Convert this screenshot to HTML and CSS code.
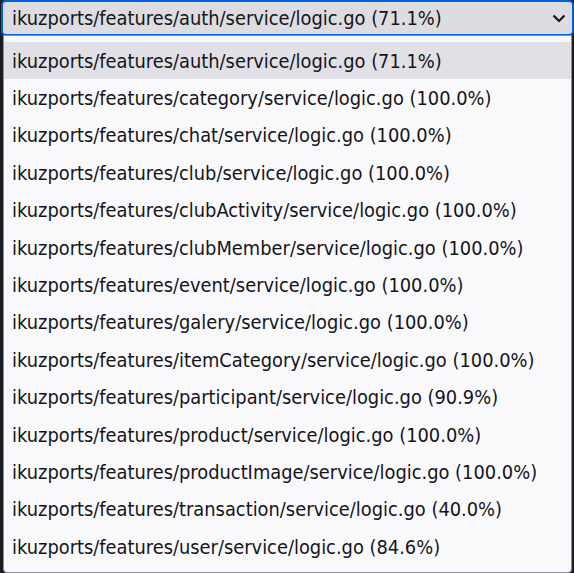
FILE: index.html
```html
<!DOCTYPE html>
<html>
<head>
<meta charset="utf-8">
<link rel="stylesheet" href="styles.css">
</head>
<body>
<div class="picker">
  <div class="select">
    <span class="value">ikuzports/features/auth/service/logic.go (71.1%)</span>
    <svg class="chev" width="14" height="9" viewBox="0 0 14 9"><path d="M1.5 1.5 L7 7 L12.5 1.5" fill="none" stroke="#15141a" stroke-width="2.2"/></svg>
  </div>
  <ul class="list">
    <li class="item active">ikuzports/features/auth/service/logic.go (71.1%)</li>
    <li class="item">ikuzports/features/category/service/logic.go (100.0%)</li>
    <li class="item">ikuzports/features/chat/service/logic.go (100.0%)</li>
    <li class="item">ikuzports/features/club/service/logic.go (100.0%)</li>
    <li class="item">ikuzports/features/clubActivity/service/logic.go (100.0%)</li>
    <li class="item">ikuzports/features/clubMember/service/logic.go (100.0%)</li>
    <li class="item">ikuzports/features/event/service/logic.go (100.0%)</li>
    <li class="item">ikuzports/features/galery/service/logic.go (100.0%)</li>
    <li class="item">ikuzports/features/itemCategory/service/logic.go (100.0%)</li>
    <li class="item">ikuzports/features/participant/service/logic.go (90.9%)</li>
    <li class="item">ikuzports/features/product/service/logic.go (100.0%)</li>
    <li class="item">ikuzports/features/productImage/service/logic.go (100.0%)</li>
    <li class="item">ikuzports/features/transaction/service/logic.go (40.0%)</li>
    <li class="item">ikuzports/features/user/service/logic.go (84.6%)</li>
  </ul>
</div>
</body>
</html>
```
FILE: styles.css
```css
html, body {
  margin: 0;
  padding: 0;
  background: #1c1b22;
  width: 574px;
  height: 573px;
  overflow: hidden;
}
.picker {
  display: flex;
  flex-direction: column;
  font-family: "DejaVu Sans Condensed", "DejaVu Sans", sans-serif;
  font-stretch: condensed;
  font-size: 19.85px;
  color: #15141a;
}
.select {
  height: 36px;
  box-sizing: border-box;
  margin: 0 0 0 1px;
  border: 2px solid #0061e0;
  border-radius: 5px;
  background: #dcdce1;
  display: flex;
  align-items: center;
  padding: 1px 6px 0 9px;
}
.value {
  flex: 1;
  white-space: nowrap;
}
.chev {
  display: block;
}
.list {
  list-style: none;
  margin: -1px 2px 0 3px;
  padding: 6px 0 6px;
  background: #f9f9fb;
  border: 1px solid #8f8f9d;
  border-radius: 0 0 4px 4px;
  height: 538px;
  box-sizing: border-box;
  display: flex;
  flex-direction: column;
}
.item {
  height: 37.4px;
  display: flex;
  align-items: center;
  padding: 1px 0 0 8px;
  box-sizing: border-box;
  white-space: nowrap;
}
.item.active {
  background: #e0e0e6;
}
```
